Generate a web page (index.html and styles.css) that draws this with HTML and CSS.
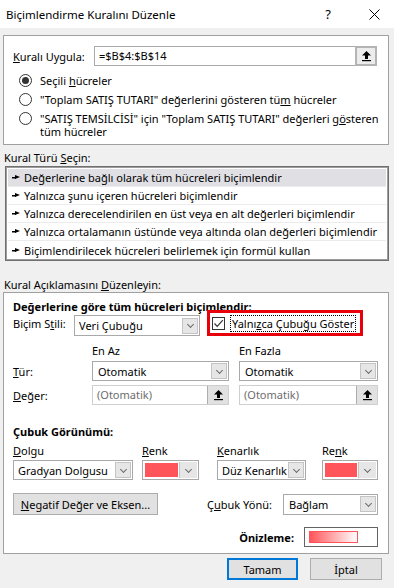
FILE: index.html
```html
<!DOCTYPE html>
<html lang="tr">
<head>
    <meta charset="UTF-8">
    <title>Biçimlendirme Kuralını Düzenle</title>
    <link rel="stylesheet" href="styles.css">
</head>
<body>
    <div class="titlebar">
        <span class="title">Biçimlendirme Kuralını Düzenle</span>
        <span class="help">?</span>
        <svg class="close" width="11" height="11" viewBox="0 0 11 11"><path d="M0.5 0.5L10.5 10.5M10.5 0.5L0.5 10.5" stroke="#000" stroke-width="1"/></svg>
    </div>

    <div class="dialog">
        <div class="group top">
            <div class="apply">
                <span class="applyLabel"><u>K</u>uralı Uygula:</span>
                <div class="field">
                    <span class="fieldText">=$B$4:$B$14</span>
                    <span class="pick big">
                        <svg width="11" height="12" viewBox="0 0 11 12"><path d="M5.5 1L10 5.5H7V9H4V5.5H1Z" fill="#000"/><rect x="1" y="10" width="9" height="1.2" fill="#000"/></svg>
                    </span>
                </div>
            </div>
            <div class="radios">
                <div class="radio"><span class="dot on"></span><span>Seçili <u>h</u>ücreler</span></div>
                <div class="radio"><span class="dot"></span><span>"Toplam SATIŞ TUTARI" değerlerini gösteren tü<u>m</u> hücreler</span></div>
                <div class="radio"><span class="dot"></span><span>"SATIŞ TEMSİLCİSİ" için "Toplam SATIŞ TUTARI" değerleri g<u>ö</u>steren<br>tüm hücreler</span></div>
            </div>
        </div>

        <div class="caption first">Kural Türü <u>S</u>eçin:</div>
        <div class="list">
            <div class="item selected"><i class="arrow"></i>Değerlerine bağlı olarak tüm hücreleri biçimlendir</div>
            <div class="item"><i class="arrow"></i>Yalnızca şunu içeren hücreleri biçimlendir</div>
            <div class="item"><i class="arrow"></i>Yalnızca derecelendirilen en üst veya en alt değerleri biçimlendir</div>
            <div class="item"><i class="arrow"></i>Yalnızca ortalamanın üstünde veya altında olan değerleri biçimlendir</div>
            <div class="item last"><i class="arrow"></i>Biçimlendirilecek hücreleri belirlemek için formül kullan</div>
        </div>

        <div class="caption second">Kural Açıklamasını <u>D</u>üzenleyin:</div>
        <div class="group bottom">
            <div class="heading">Değerlerine göre tüm hücreleri biçimlendir:</div>
            <div class="styleRow">
                <span class="styleLabel">Biçim S<u>t</u>ili:</span>
                <div class="combo w126"><span class="val">Veri Çubuğu</span><i class="drop"></i></div>
                <div class="marked">
                    <span class="check">
                        <svg width="11" height="11" viewBox="0 0 11 11"><path d="M1.5 5.5L4.2 8.3L9.8 2.2" fill="none" stroke="#333" stroke-width="1.2"/></svg>
                    </span>
                    <span class="focus">Yalnı<u>z</u>ca Çubuğu Göster</span>
                </div>
            </div>

            <div class="grid">
                <span></span>
                <span class="colHead">En Az</span>
                <span class="colHead">En Fazla</span>

                <span class="rowLabel"><u>T</u>ür:</span>
                <div class="combo"><span class="val">Otomatik</span><i class="drop"></i></div>
                <div class="combo"><span class="val">Otomatik</span><i class="drop"></i></div>

                <span class="rowLabel"><u>D</u>eğer:</span>
                <div class="field off">
                    <span class="fieldText">(Otomatik)</span>
                    <span class="pick">
                        <svg width="11" height="12" viewBox="0 0 11 12"><path d="M5.5 1L10 5.5H7V9H4V5.5H1Z" fill="#000"/><rect x="1" y="10" width="9" height="1.2" fill="#000"/></svg>
                    </span>
                </div>
                <div class="field off">
                    <span class="fieldText">(Otomatik)</span>
                    <span class="pick">
                        <svg width="11" height="12" viewBox="0 0 11 12"><path d="M5.5 1L10 5.5H7V9H4V5.5H1Z" fill="#000"/><rect x="1" y="10" width="9" height="1.2" fill="#000"/></svg>
                    </span>
                </div>
            </div>

            <div class="heading bar">Çubuk Görünümü:</div>
            <div class="looks">
                <div class="look w120">
                    <span class="lookLabel"><u>D</u>olgu</span>
                    <div class="combo"><span class="val">Gradyan Dolgusu</span><i class="drop"></i></div>
                </div>
                <div class="look w57 gap9">
                    <span class="lookLabel"><u>R</u>enk</span>
                    <div class="combo color"><span class="swatch"></span><i class="drop tall"></i></div>
                </div>
                <div class="look w89 gap18">
                    <span class="lookLabel"><u>K</u>enarlık</span>
                    <div class="combo"><span class="val">Düz Kenarlık</span><i class="drop"></i></div>
                </div>
                <div class="look w56 gap16">
                    <span class="lookLabel">Re<u>n</u>k</span>
                    <div class="combo color"><span class="swatch"></span><i class="drop tall"></i></div>
                </div>
            </div>

            <div class="axisRow">
                <button class="button neg"><u>N</u>egatif Değer ve Eksen...</button>
                <span class="dirLabel">Ç<u>u</u>buk Yönü:</span>
                <div class="combo w95 tall"><span class="val">Bağlam</span><i class="drop"></i></div>
            </div>

            <div class="previewRow">
                <span class="previewLabel">Önizleme:</span>
                <div class="preview"><span class="previewBar"></span></div>
            </div>
        </div>

        <div class="actions">
            <button class="button ok">Tamam</button>
            <button class="button cancel">İptal</button>
        </div>
    </div>
</body>
</html>
```

FILE: styles.css
```css
* {
    box-sizing: border-box;
}

body {
    margin: 0;
    width: 394px;
    height: 588px;
    background-color: #f0f0f0;
    font-family: 'Noto Sans', 'Liberation Sans', sans-serif;
    font-size: 11px;
    color: #000;
    overflow: hidden;
}

u {
    text-decoration-thickness: 1px;
    text-underline-offset: 1px;
}

.titlebar {
    height: 28px;
    background-color: #fff;
    display: flex;
    align-items: center;
    padding-left: 6px;
}

.title {
    flex: 1;
    font-size: 11.5px;
}

.help {
    font-size: 13px;
    margin-right: 38px;
}

.close {
    margin-right: 14px;
}

.dialog {
    padding: 7px 5px 0 3px;
}

.group {
    background-color: #fff;
    border: 1px solid #a0a0a0;
}

.group.top {
    height: 110px;
    padding: 10px 0 0 9px;
}

.apply {
    display: flex;
    align-items: center;
}

.applyLabel {
    width: 81px;
}

.field {
    display: flex;
    align-items: stretch;
    width: 283px;
    height: 20px;
    border: 1px solid #a9a9a9;
    background-color: #fff;
}

.fieldText {
    flex: 1;
    line-height: 18px;
    padding-left: 4px;
}

.pick {
    width: 21px;
    background-color: #e1e1e1;
    border-left: 1px solid #adadad;
    display: flex;
    align-items: center;
    justify-content: center;
}

.pick.big {
    margin: -1px -1px -1px 0;
    border: 2px solid #b4b4b4;
    background-color: #ececec;
    width: 22px;
}

.radios {
    margin: 5px 0 0 6px;
}

.radio {
    display: flex;
    align-items: flex-start;
    padding: 3px 0;
    line-height: 13px;
}

.dot {
    width: 13px;
    height: 13px;
    border: 1px solid #333;
    border-radius: 50%;
    background-color: #fff;
    margin-right: 8px;
    flex-shrink: 0;
    display: flex;
    align-items: center;
    justify-content: center;
}

.dot.on::after {
    content: "";
    width: 7px;
    height: 7px;
    border-radius: 50%;
    background-color: #333;
}

.caption {
    line-height: 15px;
    padding-left: 1px;
}

.caption.first {
    margin-top: 5px;
}

.caption.second {
    margin-top: 16px;
}

.list {
    margin: 1px 0 0 2px;
    width: 384px;
    height: 95px;
    border: 1px solid #6f6f6f;
    box-shadow: inset 0 0 0 1px #9d9d9d;
    background-color: #fff;
    padding: 2px 2px 0 2px;
}

.item {
    height: 18px;
    line-height: 17px;
    border-bottom: 1px solid #ececec;
    display: flex;
    align-items: center;
    white-space: nowrap;
}

.item.last {
    border-bottom: none;
}

.item.selected {
    background-color: #dfdfe4;
}

.arrow {
    width: 8px;
    height: 5px;
    margin: 0 4px 0 4px;
    background: linear-gradient(#000, #000) 0 2px / 4px 1.5px no-repeat;
    position: relative;
    flex-shrink: 0;
}

.arrow::after {
    content: "";
    position: absolute;
    right: 0;
    top: 0;
    border-left: 5px solid #000;
    border-top: 2.5px solid transparent;
    border-bottom: 2.5px solid transparent;
}

.group.bottom {
    height: 262px;
    padding: 7px 0 0 9px;
}

.heading {
    font-weight: bold;
    line-height: 14px;
}

.styleRow {
    display: flex;
    align-items: flex-end;
    margin-top: -4px;
    height: 26px;
}

.styleLabel {
    width: 61px;
    align-self: center;
}

.combo {
    display: flex;
    align-items: center;
    height: 20px;
    border: 1px solid #a9a9a9;
    background-color: #fff;
    padding: 0 1px 0 5px;
}

.combo .val {
    flex: 1;
    white-space: nowrap;
    overflow: hidden;
}

.w126 {
    width: 126px;
    height: 21px;
    padding-left: 4px;
}

.w95 {
    width: 95px;
}

.combo.tall {
    height: 21px;
}

.drop {
    width: 16px;
    height: 16px;
    flex-shrink: 0;
    border: 1px solid #c4c4c4;
    background-color: #e6e6e6;
    display: flex;
    align-items: center;
    justify-content: center;
}

.drop::after {
    content: "";
    width: 4px;
    height: 4px;
    border-right: 1px solid #6a6a6a;
    border-bottom: 1px solid #6a6a6a;
    transform: translateY(-1px) rotate(45deg);
}

.marked {
    margin-left: 7px;
    width: 156px;
    height: 26px;
    border: 3px solid #e8000b;
    display: flex;
    align-items: center;
    padding-left: 2px;
}

.check {
    width: 13px;
    height: 13px;
    border: 1px solid #333;
    background-color: #fff;
    display: flex;
    align-items: center;
    justify-content: center;
    margin-right: 5px;
}

.focus {
    border: 1px dotted #000;
    line-height: 15px;
    padding: 0 1px;
    white-space: nowrap;
}

.grid {
    display: grid;
    grid-template-columns: 69px 137px 139px;
    column-gap: 10px;
    margin-top: 8px;
    align-items: center;
}

.colHead {
    line-height: 14px;
    margin-bottom: 3px;
}

.grid .field {
    width: auto;
    margin-top: 4px;
    border-color: #cfcfcf;
}

.field.off .fieldText {
    color: #6d6d6d;
}

.rowLabel:nth-of-type(5) {
    margin-top: 4px;
}

.heading.bar {
    margin-top: 20px;
}

.looks {
    display: flex;
    margin-top: 5px;
}

.look {
    display: flex;
    flex-direction: column;
}

.lookLabel {
    line-height: 14px;
    margin-bottom: 2px;
}

.look .combo {
    padding-left: 4px;
}

.w120 {
    width: 120px;
}

.w57 {
    width: 57px;
}

.w89 {
    width: 89px;
}

.w56 {
    width: 56px;
}

.gap9 {
    margin-left: 9px;
}

.gap18 {
    margin-left: 18px;
}

.gap16 {
    margin-left: 16px;
}

.look .combo.color {
    padding: 1px;
    align-items: stretch;
}

.swatch {
    flex: 1;
    margin: 1px;
    background-color: #ff555a;
}

.drop.tall {
    height: auto;
    border: none;
    border-left: 1px solid #c4c4c4;
    width: 18px;
}

.axisRow {
    display: flex;
    align-items: center;
    margin-top: 13px;
}

.button {
    font-family: inherit;
    font-size: 11px;
    color: #000;
    background-color: #e1e1e1;
    border: 1px solid #adadad;
    padding: 0;
    height: 22px;
}

.neg {
    width: 145px;
}

.dirLabel {
    margin-left: 49px;
    width: 76px;
}

.previewRow {
    display: flex;
    align-items: center;
    justify-content: flex-end;
    margin: 12px 10px 0 0;
}

.previewLabel {
    font-weight: bold;
    margin-right: 10px;
}

.preview {
    width: 74px;
    height: 20px;
    border: 1px solid #646464;
    background-color: #fff;
    padding: 3px 4px;
    display: flex;
}

.previewBar {
    width: 49px;
    border: 1px solid #ff555a;
    background: linear-gradient(to right, #ff555a, #fff);
}

.actions {
    display: flex;
    justify-content: flex-end;
    margin-top: 4px;
    padding-right: 7px;
    gap: 12px;
}

.ok {
    width: 71px;
    border: 2px solid #0078d7;
}

.cancel {
    width: 72px;
}
```
